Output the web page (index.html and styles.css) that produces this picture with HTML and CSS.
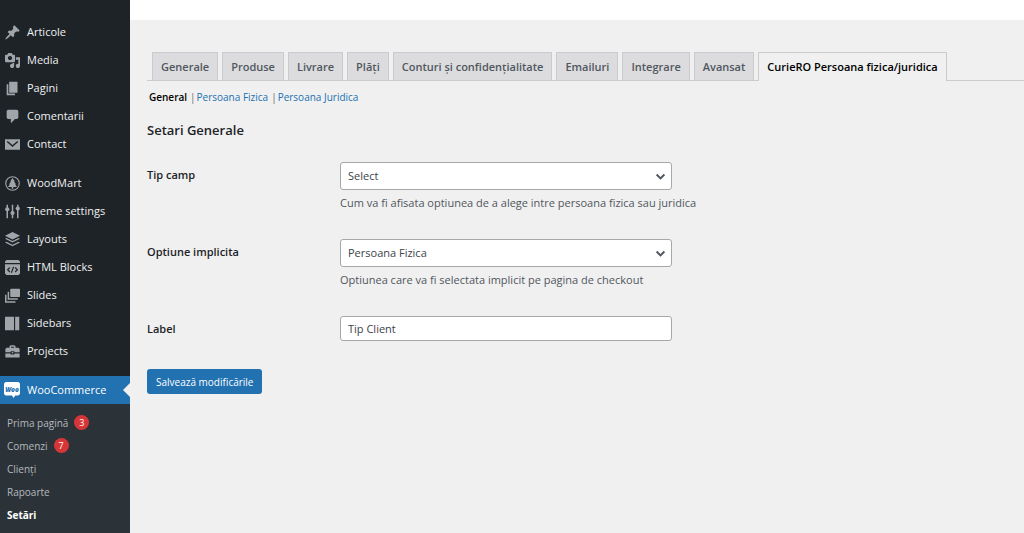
FILE: index.html
```html
<!DOCTYPE html>
<html lang="ro">
<head>
<meta charset="utf-8">
<title>Setări WooCommerce</title>
<link rel="stylesheet" href="styles.css">
</head>
<body>
<div class="layout">
  <nav class="sidebar" aria-label="Meniu principal">
    <ul class="menu">
      <li><a class="menu-link" href="#"><svg class="icon" viewBox="1 1 18 18"><path d="M10.440 3.020l1.820-1.820 6.360 6.350-1.830 1.820c-1.050-.68-2.480-.57-3.410.36l-.75.75c-.92.93-1.040 2.350-.35 3.410l-1.830 1.820-2.410-2.410-2.800 2.790c-.42.42-3.380 2.710-3.800 2.290s1.860-3.390 2.280-3.810l2.790-2.790L4.100 9.360l1.830-1.820c1.050.69 2.480.57 3.400-.36l.75-.75c.93-.92 1.050-2.350.36-3.410z"/></svg>Articole</a></li>
      <li><a class="menu-link" href="#"><svg class="icon" viewBox="1 1 18 18"><path d="M13 11V4c0-.55-.45-1-1-1h-1.670L9 1H5L3.670 3H2c-.55 0-1 .45-1 1v7c0 .55.45 1 1 1h10c.55 0 1-.45 1-1zM7 4.500c1.380 0 2.500 1.120 2.500 2.500S8.380 9.500 7 9.500 4.500 8.380 4.500 7 5.620 4.500 7 4.500zM14 6h5v10.500c0 1.380-1.120 2.500-2.500 2.500S14 17.880 14 16.500s1.120-2.500 2.500-2.500c.17 0 .34.020.5.050V9h-3V6zm-4 8.050V13h2v3.500c0 1.380-1.120 2.500-2.500 2.500S7 17.880 7 16.500 8.120 14 9.500 14c.17 0 .34.020.5.050z"/></svg>Media</a></li>
      <li><a class="menu-link" href="#"><svg class="icon" viewBox="1 1 18 18"><path d="M6 15V2h10v13H6zm-1 1h8v2H3V5h2v11z"/></svg>Pagini</a></li>
      <li><a class="menu-link" href="#"><svg class="icon" viewBox="1 1 18 18"><path d="M5 2h10c1.100 0 2 .9 2 2v7c0 1.100-.9 2-2 2h-2l-5 5v-5H5c-1.100 0-2-.9-2-2V4c0-1.100.9-2 2-2z"/></svg>Comentarii</a></li>
      <li><a class="menu-link" href="#"><svg class="icon" viewBox="0 0 20 20"><path d="M0 3h20v14H0z"/><path class="cut-line" d="m3 6 7 6 7-6"/></svg>Contact</a></li>
    </ul>
    <ul class="menu menu-theme">
      <li><a class="menu-link" href="#"><svg class="icon" viewBox="0 0 20 20"><circle class="line thin" cx="10" cy="10" r="9"/><path d="m10 2.500 3 4.500-.8.300L14.500 11l-.8.300L16 14.500h-5V17H9v-2.500H4l2.300-3.200-.8-.3 2.300-3.700L7 7z"/></svg>WoodMart</a></li>
      <li><a class="menu-link" href="#"><svg class="icon" viewBox="0 0 20 20"><path class="line" d="M3 1v18M10 1v18M17 1v18"/><circle cx="3" cy="7" r="2.800"/><circle cx="10" cy="12" r="2.800"/><circle cx="17" cy="6" r="2.800"/></svg>Theme settings</a></li>
      <li><a class="menu-link" href="#"><svg class="icon" viewBox="0 0 20 20"><path d="m10 0 10 5-10 5L0 5z"/><path d="m0 9 2-1 8 4 8-4 2 1-10 5zM0 14l2-1 8 4 8-4 2 1-10 5z"/></svg>Layouts</a></li>
      <li><a class="menu-link" href="#"><svg class="icon" viewBox="0 0 20 20"><path d="M2 0h16l2 2v2H0V2zM0 5.500h20V18l-2 2H2l-2-2z"/><path class="cut-line thin" d="m6.500 10-3 3 3 3M13.500 10l3 3-3 3M11.500 9l-3 8"/></svg>HTML Blocks</a></li>
      <li><a class="menu-link" href="#"><svg class="icon" viewBox="0 0 20 20"><rect x="7" y="1" width="13" height="11" rx="1"/><path class="line" d="M4.500 5v9.500H17M1 9v9.500h13"/></svg>Slides</a></li>
      <li><a class="menu-link" href="#"><svg class="icon" viewBox="0 0 20 20"><path d="M0 1h12v18H0zM13.500 1H19v18h-5.500z"/></svg>Sidebars</a></li>
      <li><a class="menu-link" href="#"><svg class="icon" viewBox="0 0 20 20"><path fill-rule="evenodd" d="M6 5V3l1.500-1.500h5L14 3v2h4l1.500 1.500V11h-7V9.500h-5V11h-7V6.500L2 5zm2 0h4V3.500H8zM.5 12.500h7V14h5v-1.500h7V18H.5z"/><path d="M9 10.500h2v2H9z"/></svg>Projects</a></li>
    </ul>
    <ul class="menu menu-shop">
      <li>
        <a class="menu-link current" href="#"><svg class="icon woo" viewBox="0 0 20 20"><path d="M2 0h16l2 2v13l-2 2h-4l-2 3-2-3H2l-2-2V2z"/><text class="woo-text" x="10" y="12" text-anchor="middle">Woo</text></svg>WooCommerce</a>
        <ul class="submenu">
          <li><a class="sub-link" href="#">Prima pagină <span class="badge">3</span></a></li>
          <li><a class="sub-link" href="#">Comenzi <span class="badge">7</span></a></li>
          <li><a class="sub-link" href="#">Clienți</a></li>
          <li><a class="sub-link" href="#">Rapoarte</a></li>
          <li><a class="sub-link active" href="#">Setări</a></li>
        </ul>
      </li>
    </ul>
  </nav>
  <div class="page">
    <header class="topbar"></header>
    <main class="content">
      <nav class="tabs" aria-label="Secțiuni setări">
        <a class="tab" href="#">Generale</a>
        <a class="tab" href="#">Produse</a>
        <a class="tab" href="#">Livrare</a>
        <a class="tab" href="#">Plăți</a>
        <a class="tab" href="#">Conturi și confidențialitate</a>
        <a class="tab" href="#">Emailuri</a>
        <a class="tab" href="#">Integrare</a>
        <a class="tab" href="#">Avansat</a>
        <a class="tab selected" href="#">CurieRO Persoana fizica/juridica</a>
      </nav>
      <ul class="sections">
        <li><a class="section here" href="#">General</a></li>
        <li><span class="bar">|</span><a class="section" href="#">Persoana Fizica</a></li>
        <li><span class="bar">|</span><a class="section" href="#">Persoana Juridica</a></li>
      </ul>
      <h2 class="title">Setari Generale</h2>
      <form class="form">
        <div class="row">
          <label class="label" for="type">Tip camp</label>
          <div class="field">
            <span class="select-wrap"><select class="control" id="type"><option>Select</option></select><svg class="chevron" viewBox="0 0 20 20"><path d="m4 7 6 6 6-6"/></svg></span>
            <p class="help">Cum va fi afisata optiunea de a alege intre persoana fizica sau juridica</p>
          </div>
        </div>
        <div class="row">
          <label class="label" for="default">Optiune implicita</label>
          <div class="field">
            <span class="select-wrap"><select class="control" id="default"><option>Persoana Fizica</option></select><svg class="chevron" viewBox="0 0 20 20"><path d="m4 7 6 6 6-6"/></svg></span>
            <p class="help">Optiunea care va fi selectata implicit pe pagina de checkout</p>
          </div>
        </div>
        <div class="row">
          <label class="label" for="label">Label</label>
          <div class="field"><input class="control text" id="label" type="text" value="Tip Client"></div>
        </div>
        <button class="save" type="button">Salvează modificările</button>
      </form>
    </main>
  </div>
</div>
</body>
</html>
```

FILE: styles.css
```css
* { box-sizing: border-box; }
body {
  margin: 0;
  background: #f0f0f0;
  color: #3c434a;
  font: 11px/16px "Open Sans", "Noto Sans", sans-serif;
}
ul { list-style: none; margin: 0; padding: 0; }
a { text-decoration: none; }

.layout { display: flex; min-height: 100vh; }

.sidebar {
  flex: 0 0 130px;
  padding-top: 18px;
  background: #1d2327;
  display: flex;
  flex-direction: column;
}
.menu-theme { margin-top: 11px; }
.menu-shop { margin-top: 11px; flex: 1; background: #2c3338; }
.menu-link {
  display: flex;
  align-items: center;
  gap: 7px;
  height: 28px;
  padding-left: 5px;
  color: #f0f0f1;
  white-space: nowrap;
}
.icon { width: 15px; height: 15px; fill: #a0a5aa; flex: none; }
.icon .line { fill: none; stroke: #a0a5aa; stroke-width: 2; }
.icon .cut-line { fill: none; stroke: #1d2327; stroke-width: 2; }
.icon .thin { stroke-width: 1.5; }
.current { position: relative; padding-left: 4px; background: #2271b1; color: #fff; }
.current::after {
  content: "";
  position: absolute;
  right: 0;
  top: 7px;
  border: 7px solid transparent;
  border-left: 0;
  border-right-color: #f0f0f0;
}
.woo { width: 16px; height: 16px; fill: #fff; }
.woo-text { fill: #2271b1; font: italic 800 8px "Open Sans", sans-serif; }
.submenu { padding: 7px 0; }
.sub-link {
  display: flex;
  align-items: center;
  gap: 6px;
  height: 23px;
  padding-left: 7px;
  color: #b4b9be;
  font-size: 10px;
}
.active { color: #fff; font-weight: 700; }
.badge {
  width: 15px;
  height: 15px;
  border-radius: 50%;
  background: #d63638;
  color: #fff;
  font-size: 9px;
  line-height: 15px;
  text-align: center;
}

.page { flex: 1; min-width: 0; }
.topbar { height: 20px; background: #fff; }
.content { padding: 32px 0 0 17px; }
.tabs {
  display: flex;
  gap: 4px;
  padding-left: 5px;
  border-bottom: 1px solid #c9cbcf;
}
.tab {
  height: 28px;
  padding: 6px 8px;
  border: 1px solid #c9cbcf;
  border-bottom: 0;
  background: #dcdcde;
  color: #50575e;
  font-weight: 600;
  white-space: nowrap;
}
.selected { margin-bottom: -1px; height: 29px; background: #f0f0f0; color: #000; }

.sections { display: flex; gap: 3px; padding: 8px 2px 0; font-size: 10px; }
.section { color: #2271b1; }
.here { color: #000; font-weight: 600; }
.bar { color: #646970; margin-right: 1px; }
.title { margin: 16px 0 0; font-size: 13px; line-height: 18px; font-weight: 600; color: #1d2327; }

.form { padding-top: 23px; }
.row { display: flex; margin-bottom: 28px; }
.label { flex: 0 0 193px; padding-top: 5px; font-weight: 600; color: #1d2327; }
.field { flex: 1; min-width: 0; }
.select-wrap { display: block; position: relative; max-width: 332px; }
.control {
  display: block;
  width: 100%;
  max-width: 332px;
  height: 28px;
  padding: 0 7px;
  border: 1px solid #a5a8ab;
  border-radius: 3px;
  background: #fff;
  color: #3c434a;
  font: inherit;
  appearance: none;
}
.text { height: 25px; }
.chevron {
  position: absolute;
  right: 5px;
  top: 8px;
  width: 13px;
  height: 13px;
  fill: none;
  stroke: #50575e;
  stroke-width: 3;
  pointer-events: none;
}
.help { margin: 5px 0 0; color: #50575e; }
.save {
  display: block;
  height: 25px;
  padding: 0 9px;
  border: 0;
  border-radius: 3px;
  background: #2271b1;
  color: #fff;
  font: inherit;
  font-size: 10px;
}
```
